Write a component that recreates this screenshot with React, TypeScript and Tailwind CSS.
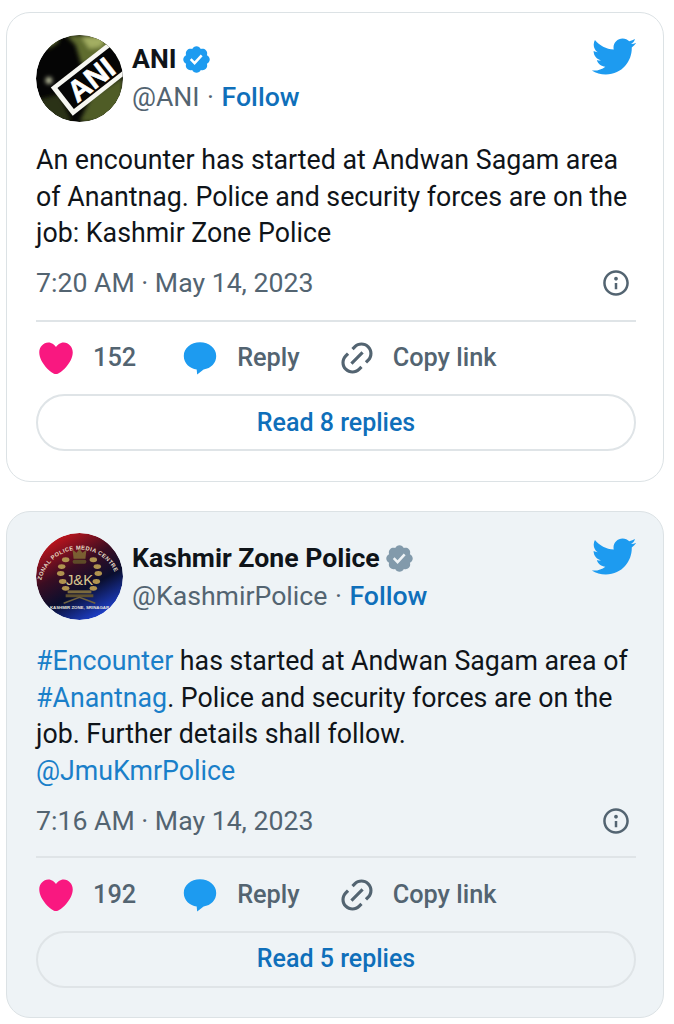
import type { ReactNode } from "react";

const TWITTER = "M23.643 4.937c-.835.37-1.732.62-2.675.733.962-.576 1.7-1.49 2.048-2.578-.9.534-1.897.922-2.958 1.13-.85-.904-2.06-1.47-3.4-1.47-2.572 0-4.658 2.086-4.658 4.66 0 .364.042.718.12 1.06-3.873-.195-7.304-2.05-9.602-4.868-.4.69-.63 1.49-.63 2.342 0 1.616.823 3.043 2.072 3.878-.764-.025-1.482-.234-2.11-.583v.06c0 2.257 1.605 4.14 3.737 4.568-.392.106-.803.162-1.227.162-.3 0-.593-.028-.877-.082.593 1.85 2.313 3.198 4.352 3.234-1.595 1.25-3.604 1.995-5.786 1.995-.376 0-.747-.022-1.112-.065 2.062 1.323 4.51 2.093 7.14 2.093 8.57 0 13.255-7.098 13.255-13.254 0-.2-.005-.402-.014-.602.91-.658 1.7-1.477 2.323-2.41z";
const BADGE = "M22.25 12c0-1.43-.88-2.67-2.19-3.34.46-1.39.2-2.9-.81-3.91s-2.52-1.27-3.91-.81c-.66-1.31-1.91-2.19-3.34-2.19s-2.67.88-3.33 2.19c-1.4-.46-2.91-.2-3.92.81s-1.26 2.52-.8 3.91c-1.31.67-2.2 1.91-2.2 3.34s.89 2.67 2.2 3.34c-.46 1.39-.21 2.9.8 3.91s2.52 1.26 3.91.81c.67 1.31 1.91 2.19 3.34 2.19s2.68-.88 3.34-2.19c1.39.45 2.9.2 3.91-.81s1.27-2.52.81-3.91c1.31-.67 2.19-1.91 2.19-3.34zm-11.71 4.2L6.8 12.46l1.41-1.42 2.26 2.26 4.8-5.23 1.47 1.36-6.2 6.77z";
const HEART = "M12 21.638h-.014C9.403 21.59 1.95 14.856 1.95 8.478c0-3.064 2.525-5.754 5.403-5.754 2.29 0 3.83 1.58 4.646 2.73.814-1.148 2.354-2.73 4.645-2.73 2.88 0 5.404 2.69 5.404 5.755 0 6.376-7.454 13.11-10.037 13.157H12z";
const BUBBLE = "M12 1.5C5.9 1.5 1.2 5.4 1.2 10.6c0 4.9 4 8.4 8.6 9l.3 3.4 4.3-3.4c5-.8 8.4-4.3 8.4-9C22.800 5.400 18 1.500 12 1.500z";
const LINK = "M18.36 5.64c-1.95-1.96-5.11-1.96-7.07 0L9.88 7.05 8.46 5.64l1.42-1.42c2.73-2.73 7.16-2.73 9.9 0 2.73 2.74 2.73 7.17 0 9.9l-1.42 1.42-1.41-1.42 1.41-1.41c1.96-1.96 1.96-5.12 0-7.07zm-2.12 3.53l-7.07 7.07-1.41-1.41 7.07-7.07 1.41 1.41zm-12.02.71l1.42-1.42 1.41 1.42-1.41 1.41c-1.96 1.96-1.96 5.12 0 7.07 1.95 1.96 5.11 1.96 7.07 0l1.41-1.41 1.42 1.41-1.42 1.42c-2.73 2.73-7.16 2.73-9.9 0-2.73-2.74-2.73-7.17 0-9.9z";
const INFO = "M13.5 8.5c0 .83-.67 1.5-1.5 1.5s-1.5-.67-1.5-1.5S11.17 7 12 7s1.5.67 1.5 1.5zM13 17v-5h-2v5h2zm-1 5.25c5.66 0 10.25-4.59 10.25-10.25S17.66 1.75 12 1.75 1.75 6.34 1.75 12 6.34 22.25 12 22.25zM20.25 12c0 4.56-3.69 8.25-8.25 8.25S3.75 16.56 3.75 12 7.44 3.75 12 3.75 20.25 7.44 20.25 12z";

function Icon({ d, className }: { d: string; className: string }) {
  return (
    <svg viewBox="0 0 24 24" fill="currentColor" className={className}>
      <path d={d} />
    </svg>
  );
}

function AniAvatar() {
  return (
    <svg viewBox="0 0 88 88" className="h-[87px] w-[87px] shrink-0 rounded-full">
      <defs>
        <filter id="aniBlur"><feGaussianBlur stdDeviation="2" /></filter>
        <clipPath id="aniClip"><circle cx="44" cy="44" r="44" /></clipPath>
      </defs>
      <g clipPath="url(#aniClip)">
        <rect width="88" height="88" fill="#050505" />
        <g filter="url(#aniBlur)">
          <path d="M10 4L24 0 22 8 12 14z" fill="#59652c" />
          <path d="M30 0L88 0 88 30 60 24 46 30 40 10z" fill="#5f6c2e" />
          <path d="M46 2L70 2 66 12 54 14z" fill="#a3ae62" />
          <path d="M56 62L88 42 88 88 44 88z" fill="#4f5b26" />
          <path d="M0 66L24 60 36 88 0 88z" fill="#2b3216" />
          <circle cx="13" cy="46" r="3.200" fill="#d5dab4" />
        </g>
        <g transform="rotate(-38 56 44)">
          <rect x="18" y="26" width="82" height="36" fill="#f7f7f2" />
          <rect x="23" y="30.500" width="72" height="27" fill="#050505" />
          <text x="55" y="55" textAnchor="middle" fontFamily="Liberation Sans, sans-serif" fontWeight="700" fontSize="30" fill="#ffffff" stroke="#ffffff" strokeWidth="0.600">ANI</text>
        </g>
      </g>
    </svg>
  );
}

function KashmirAvatar() {
  const leaves = [[30, 27], [26, 34], [25, 41], [27, 49], [30, 56], [58, 27], [62, 34], [63, 41], [61, 49], [58, 56]];
  return (
    <svg viewBox="0 0 88 88" className="h-[87px] w-[87px] shrink-0 rounded-full">
      <defs>
        <linearGradient id="kzBg" x1="0.1" y1="0.1" x2="0.6" y2="1">
          <stop offset="0" stopColor="#c8151c" />
          <stop offset="0.4" stopColor="#3a0d22" />
          <stop offset="0.68" stopColor="#0a0e2e" />
          <stop offset="1" stopColor="#1c3cc0" />
        </linearGradient>
        <path id="kzArc" d="M5 50A39.500 39.500 0 0 1 83 50" fill="none" />
      </defs>
      <circle cx="44" cy="44" r="44" fill="url(#kzBg)" />
      <text fontFamily="Liberation Sans, sans-serif" fontWeight="700" fontSize="5.800" fill="#e8dfc8" letterSpacing="0.400">
        <textPath href="#kzArc" startOffset="2%">ZONAL POLICE MEDIA CENTRE</textPath>
      </text>
      <path d="M38 26l-1-9 4 3 3-4 3 4 4-3-1 9z" fill="#7a5f32" />
      <rect x="37" y="27" width="14" height="4" rx="2" fill="#5e4a28" />
      {leaves.map(([x, y]) => (
        <ellipse key={`${x}-${y}`} cx={x} cy={y} rx="3.800" ry="2.500" fill="#b0934f" />
      ))}
      <text x="44" y="53" textAnchor="middle" fontFamily="Liberation Sans, sans-serif" fontSize="15" fill="#d9c68f">J&amp;K</text>
      <rect x="32" y="58" width="24" height="3" fill="#7b6a3e" />
      <rect x="30" y="62" width="28" height="3" fill="#5e5030" />
      <path d="M28 71L44 65 60 71" fill="none" stroke="#6f6240" strokeWidth="1.500" />
      <text x="44" y="77" textAnchor="middle" fontFamily="Liberation Sans, sans-serif" fontWeight="700" fontSize="4.400" fill="#e8e4dc">KASHMIR ZONE, SRINAGAR</text>
    </svg>
  );
}

function Action({ icon, label, iconClass, gap }: { icon: string; label: string; iconClass: string; gap: string }) {
  return (
    <div className={`flex items-center ${gap}`}>
      <Icon d={icon} className={iconClass} />
      <span className="text-[25.300px] font-medium leading-[32px] text-[#536471]">{label}</span>
    </div>
  );
}

function Tweet({
  avatar, name, handle, badge, body, time, likes, replies, card, bodyGap, nameGap, birdGap, ruleGap, actionGap,
}: {
  avatar: ReactNode; name: string; handle: string; badge: string; body: ReactNode;
  time: string; likes: string; replies: string; card: string; bodyGap: string; nameGap: string; birdGap: string;
  ruleGap: string; actionGap: string;
}) {
  return (
    <article className={`rounded-[24px] border border-[#dce2e5] pl-[29px] pr-[27px] ${card}`}>
      <header className="flex items-start">
        <div className="flex flex-1 items-start gap-[9px]">
          {avatar}
          <div className={`flex flex-col ${nameGap}`}>
            <div className="flex h-[38px] items-center gap-[4px]">
              <span className="text-[26.670px] font-bold leading-[30px] text-[#0f1419]">{name}</span>
              <Icon d={BADGE} className={`h-[31px] w-[31px] ${badge}`} />
            </div>
            <div className="flex h-[38px] items-center text-[26.670px] leading-[30px] text-[#536471]">
              <span>{handle}</span>
              <span className="mx-[7.500px]">·</span>
              <span className="font-medium text-[#0f6fba]">Follow</span>
            </div>
          </div>
        </div>
        <Icon d={TWITTER} className={`mr-[-1px] h-[47px] w-[47px] text-[#1d9bf0] ${birdGap}`} />
      </header>
      <p className={`text-[26.750px] leading-[36.670px] text-[#0f1419] ${bodyGap}`}>{body}</p>
      <div className="mt-[13px] flex h-[36px] items-center justify-between text-[26.670px] text-[#536471]">
        <span>{time}</span>
        <Icon d={INFO} className="mr-[5px] h-[30px] w-[30px]" />
      </div>
      <div className={`border-t-2 border-[#dfe4e7] ${ruleGap}`} />
      <div className={`flex h-[34px] items-center ${actionGap}`}>
        <Action icon={HEART} label={likes} iconClass="h-[40px] w-[40px] text-[#f91880]" gap="gap-[17px]" />
        <Action icon={BUBBLE} label="Reply" iconClass="h-[36px] w-[36px] text-[#1d9bf0]" gap="gap-[19px] ml-[46px]" />
        <Action icon={LINK} label="Copy link" iconClass="h-[38px] w-[38px] text-[#536471]" gap="gap-[17px] ml-[38px]" />
      </div>
      <div className="mt-[19px] flex h-[57px] items-center justify-center rounded-full border-2 border-[#dfe4e7] text-[25px] font-medium text-[#0f6fba]">
        {replies}
      </div>
    </article>
  );
}

export default function App() {
  const blue = "text-[#1a7fc9]";
  return (
    <main className="flex min-h-[1024px] flex-col gap-[29px] bg-white pb-[6px] pl-[6px] pr-[10px] pt-[12px] font-['Roboto',sans-serif]">
      <Tweet
        avatar={<AniAvatar />}
        name="ANI"
        handle="@ANI"
        badge="text-[#1d9bf0]"
        card="bg-white pt-[22px] pb-[30px]"
        bodyGap="mt-[20px]"
        nameGap="mt-[5px]"
        birdGap="mt-[-2px]"
        ruleGap="mt-[19px]"
        actionGap="mt-[19px]"
        body={<>An encounter has started at Andwan Sagam area<br />of Anantnag. Police and security forces are on the<br />job: Kashmir Zone Police</>}
        time="7:20 AM · May 14, 2023"
        likes="152"
        replies="Read 8 replies"
      />
      <Tweet
        avatar={<KashmirAvatar />}
        name="Kashmir Zone Police"
        handle="@KashmirPolice"
        badge="text-[#829aab]"
        card="bg-[#eef3f6] pt-[21px] pb-[29px]"
        bodyGap="mt-[23px]"
        nameGap="mt-[6px]"
        birdGap="mt-[0px]"
        ruleGap="mt-[17px]"
        actionGap="mt-[20px]"
        body={<><span className={blue}>#Encounter</span> has started at Andwan Sagam area of<br /><span className={blue}>#Anantnag</span>. Police and security forces are on the<br />job. Further details shall follow.<br /><span className={blue}>@JmuKmrPolice</span></>}
        time="7:16 AM · May 14, 2023"
        likes="192"
        replies="Read 5 replies"
      />
    </main>
  );
}
